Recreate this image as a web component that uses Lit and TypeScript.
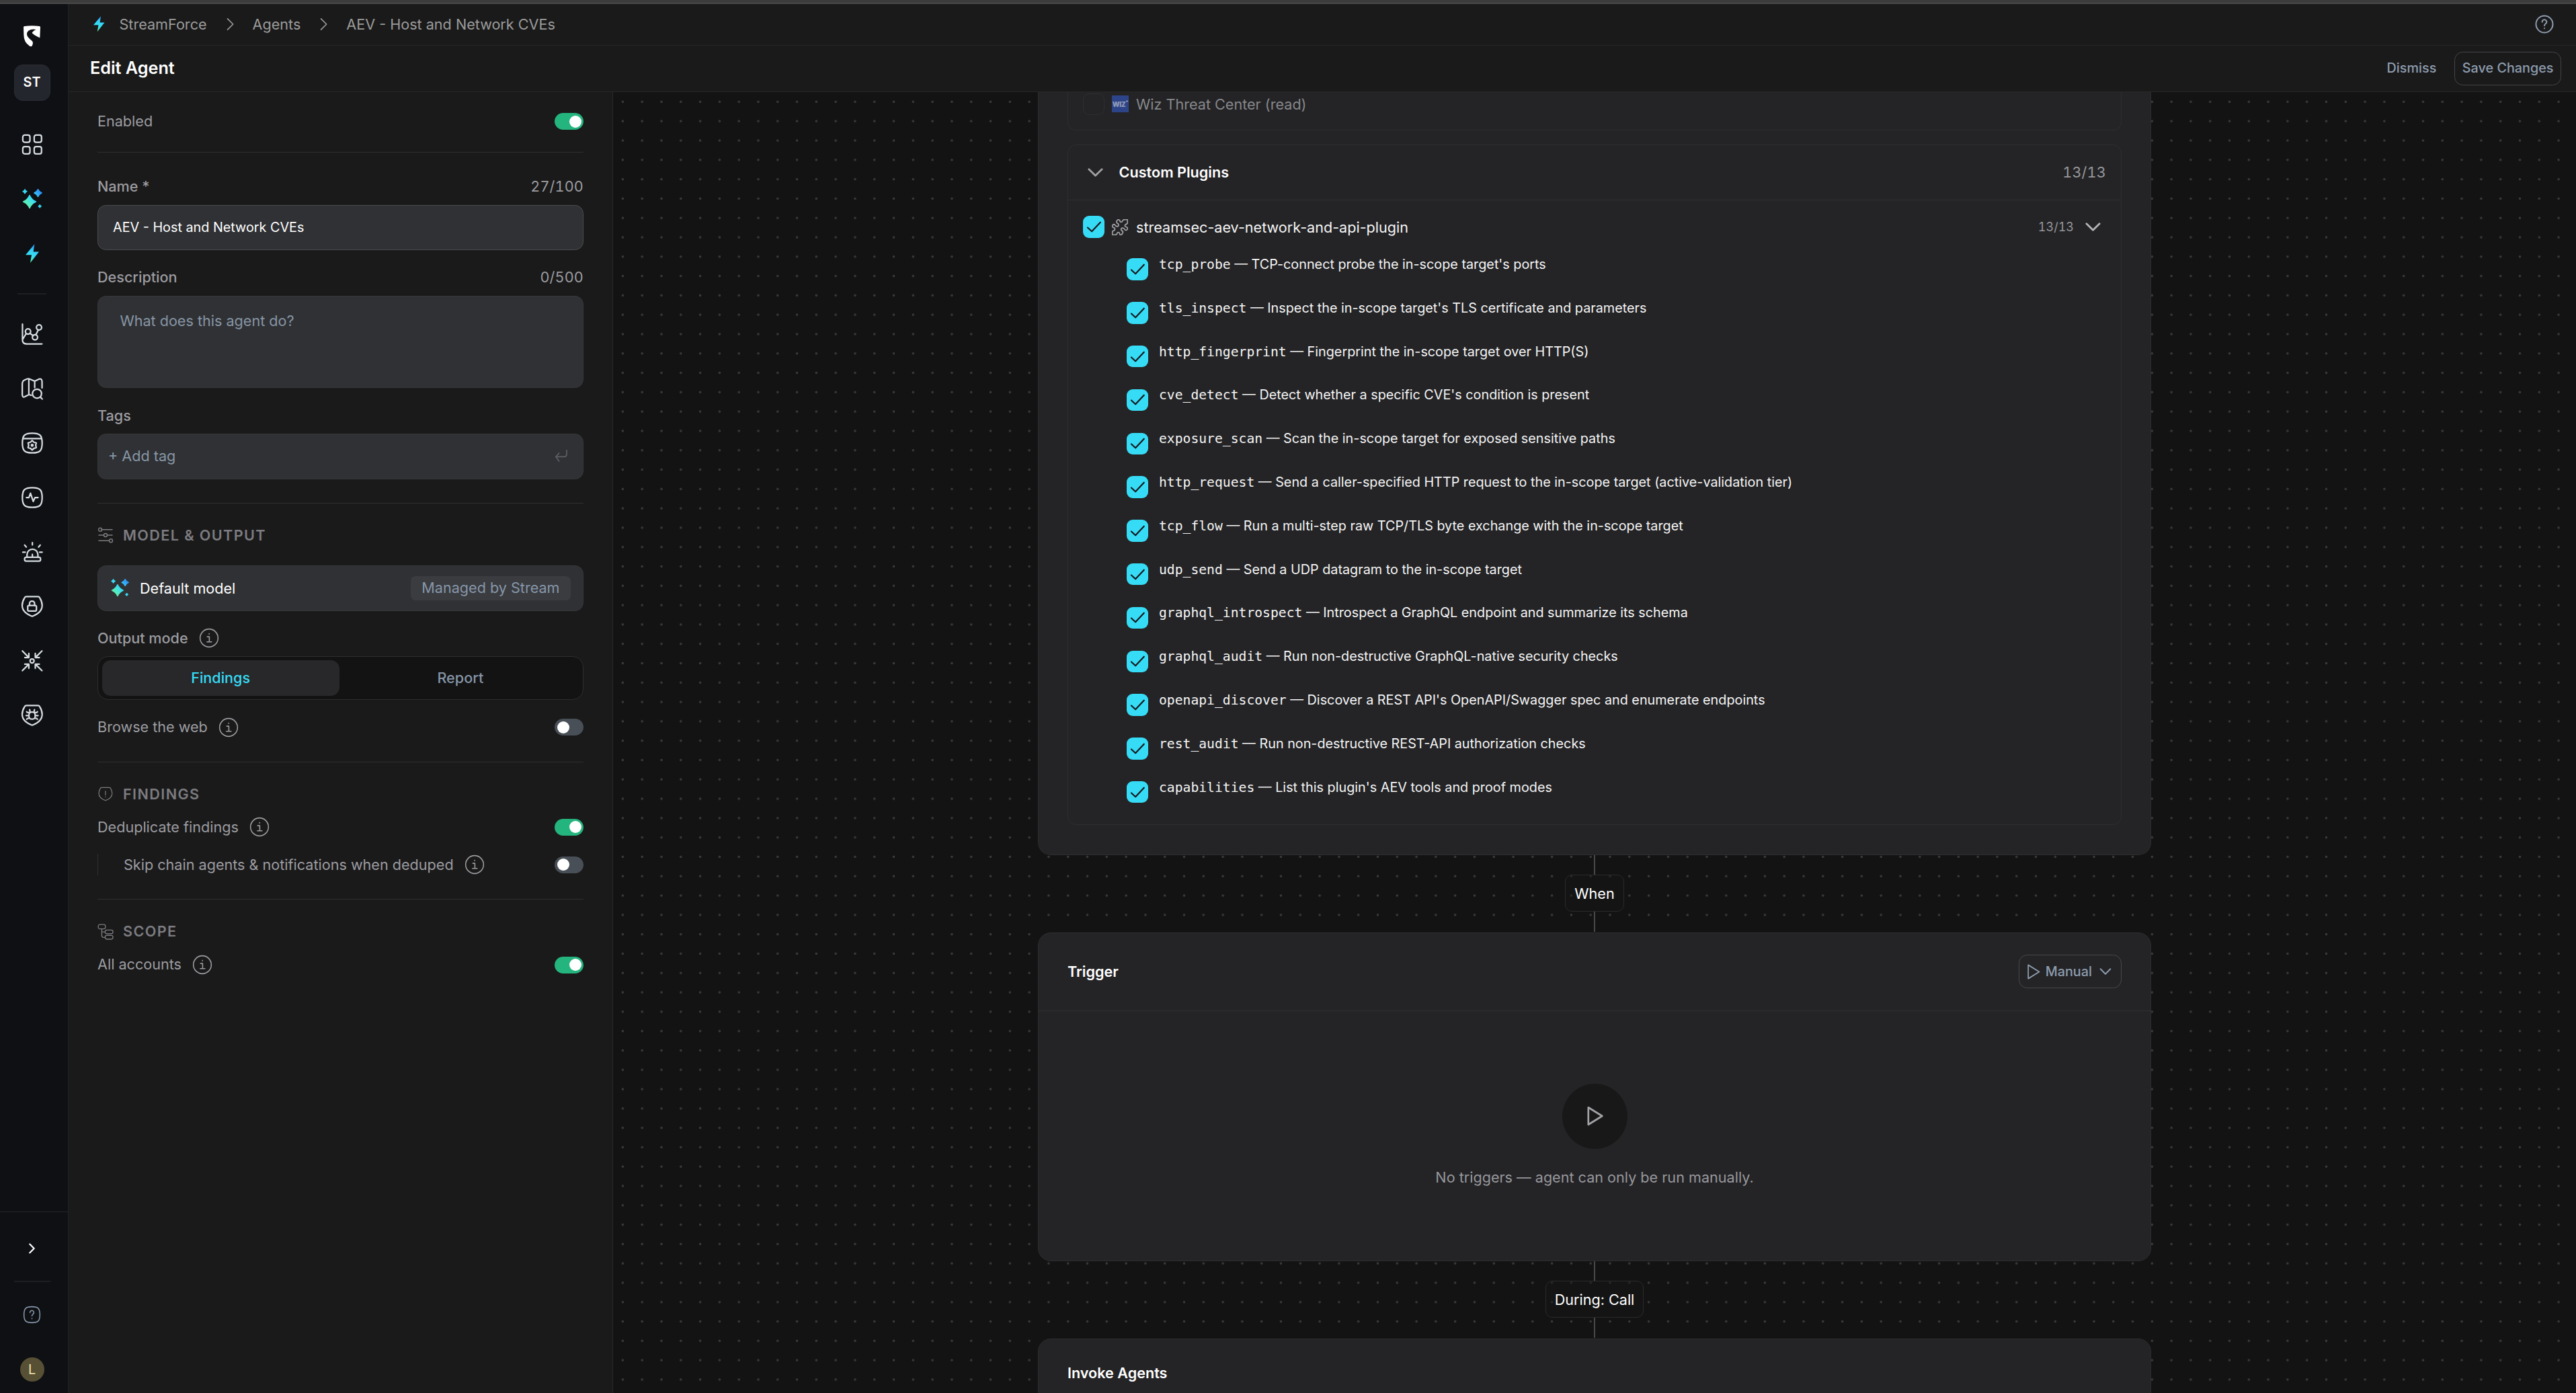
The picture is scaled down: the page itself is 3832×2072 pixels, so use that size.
import { LitElement, html, svg, css, nothing } from "lit";
import { customElement, property } from "lit/decorators.js";

const star = (x: number, y: number, r: number) => {
  const k = r * 0.3;
  return `M${x} ${y - r}Q${x + k} ${y - k} ${x + r} ${y}Q${x + k} ${y + k} ${x} ${y + r}Q${x - k} ${y + k} ${x - r} ${y}Q${x - k} ${y - k} ${x} ${y - r}Z`;
};

const SHIELD =
  "M6.2 2.3H17.6Q18.8 2.3 19.4 3.4C21 6 21.8 8.5 21.8 11C21.8 17 17 19.9 11.9 21.8C6.8 19.9 2 17 2 11C2 8.5 2.8 6 4.4 3.4Q5 2.3 6.2 2.3Z";
const SQUIRCLE =
  "M2.2 12C2.2 4.4 4.4 2.2 12 2.2S21.8 4.4 21.8 12S19.6 21.8 12 21.8S2.2 19.6 2.2 12Z";
const gear = Array.from({ length: 12 }, (_, i) => {
  const r = i % 2 ? 3.5 : 4.7;
  const a = (i * Math.PI) / 6 - Math.PI / 2;
  return `${(11.9 + r * Math.cos(a)).toFixed(2)},${(14.2 + r * Math.sin(a)).toFixed(2)}`;
}).join(" ");

const line24: Record<string, unknown> = {
  grid: svg`<rect x="2.6" y="2.6" width="7.1" height="7.1" rx="1.9"/><rect x="13.9" y="2.6" width="7.3" height="7.1" rx="1.9"/><rect x="2.6" y="14.1" width="7.1" height="7.1" rx="1.9"/><rect x="13.9" y="14.1" width="7.3" height="7.1" rx="1.9"/>`,
  chart: svg`<path d="M2.3 2V17.6Q2.3 21.7 6.4 21.7H21.6M2.6 17L5.9 11.5M9.7 11.2L12.9 13.5M15.5 12.7L17.9 8"/><circle cx="7.8" cy="9.4" r="2.6"/><circle cx="14.7" cy="15.2" r="2.6"/><circle cx="18.7" cy="5.3" r="2.6"/>`,
  map: svg`<path d="M11 18.6L8.6 18L4.4 20.2Q2.1 21 2.1 17.8V7.6Q2.1 4.3 4.4 3.5Q8 1.5 9.4 2.5L14.4 4.7L18.6 2.6Q21.6 1.6 21.7 5V11.4M8.6 2.6V18M14.4 4.8V11"/><circle cx="16.7" cy="17" r="4.5"/><path d="M20 20.4L21.9 22.3"/>`,
  boxgear: svg`<path d="${SQUIRCLE}M2.6 7.6H21.4"/><polygon points="${gear}"/><circle cx="11.9" cy="14.2" r=".8"/>`,
  pulse: svg`<path d="${SQUIRCLE}M6.2 12H8.7L10.2 7.7L13 15.9L14.7 12H17.7"/>`,
  siren: svg`<path d="M6.8 17V14.6A5.4 5.4 0 0 1 17.6 14.6V17M12.1 14.4V16.8M12.1 2.8V5M4.4 5.2L6.1 7.1M19.9 5.2L18.2 7.1M2.6 12.3H5M19.3 12.3H21.8"/><rect x="4.4" y="17.3" width="15.8" height="3.8" rx="1.6"/>`,
  lock: svg`<path d="${SHIELD}"/><rect x="7.5" y="11" width="8.6" height="5.6" rx="1.2"/><path d="M9.3 11V9.2A2.5 2.5 0 0 1 14.3 9.2V11"/>`,
  focus: svg`<circle cx="11.8" cy="12" r="2"/><path d="M2.2 2.2L8.4 8.6M8.6 4.6V8.7H4.6M21.6 2.2L15.2 8.6M15 4.6V8.7H19M2.2 21.7L8.4 15.4M8.6 19.4V15.3H4.6M21.6 21.7L15.2 15.4M15 19.4V15.3H19"/>`,
  bug: svg`<path d="${SHIELD}"/><rect x="8.7" y="8.8" width="6.2" height="7" rx="3"/><path d="M8.9 9.2Q6.6 9.6 6.5 8.4M14.7 9.2Q17 9.6 17.1 8.4M8.6 12.2H5.9M15 12.2H17.7M8.9 15Q6.6 14.8 6.5 16M14.7 15Q17 14.8 17.1 16M9.9 8.6L9.4 6.4M13.7 8.6L14.2 6.4"/>`,
  alert: svg`<path d="${SHIELD}M11.9 7.6V13.4M11.9 16V16.4"/>`,
  info: svg`<circle cx="12" cy="12" r="10"/><path d="M10 10.6H12.3V16.2M9.6 16.3H14.9M12.1 7.2V7.6"/>`,
  help: svg`<path d="${SQUIRCLE}M9.6 9.4A2.4 2.4 0 1 1 13.3 11.3Q12 12.2 12 13.6M12 16.6V16.9"/>`,
  helpround: svg`<circle cx="12" cy="12" r="10"/><path d="M9.4 9.4A2.6 2.6 0 1 1 13.4 11.4Q12 12.4 12 13.7M12 16.7V17"/>`,
  right: svg`<path d="M9 5L16 12L9 19"/>`,
  down: svg`<path d="M4 8L12 16L20 8"/>`,
  play: svg`<path d="M5.5 3L20 12L5.5 21Z"/>`,
  check: svg`<path d="M4.6 12.8L9.4 17.2L19.2 6.8"/>`,
  sliders: svg`<path d="M6.2 3.8H22M2 12H9.4M14.8 12H22M2 20.2H17.4"/><circle cx="4" cy="3.8" r="2.5"/><circle cx="12" cy="12" r="2.5"/><circle cx="20" cy="20.2" r="2.5"/>`,
  tree: svg`<rect x="1.2" y="1.2" width="10.6" height="6.4" rx="2.4"/><rect x="11.4" y="9.4" width="11.6" height="5.6" rx="2.4"/><rect x="11.4" y="17.4" width="11.6" height="5.6" rx="2.4"/><path d="M6.4 7.6V17.6Q6.4 20.3 9 20.3H11.4M6.4 12.2H11.4"/>`,
};

@customElement("ui-icon")
class UiIcon extends LitElement {
  @property() name = "";
  @property({ type: Number }) size = 36;
  @property({ type: Number }) weight = 1.5;
  static styles = css`
    :host { display: inline-flex; flex: none; }
    svg { display: block; fill: none; stroke: currentColor; stroke-linecap: round; stroke-linejoin: round; overflow: visible; }
  `;
  render() {
    return html`<svg width=${this.size} height=${this.size} viewBox="0 0 24 24" stroke-width=${this.weight}>${line24[this.name] ?? nothing}</svg>`;
  }
}

@customElement("ui-switch")
class UiSwitch extends LitElement {
  @property({ type: Boolean, reflect: true }) on = false;
  static styles = css`
    :host { display: flex; flex: none; align-items: center; width: 43px; height: 25px; border-radius: 12.5px; background: #484f57; padding: 0 3.5px; box-sizing: border-box; }
    :host([on]) { background: #24b47e; justify-content: flex-end; }
    .knob { width: 18px; height: 18px; border-radius: 50%; background: #fff; }
  `;
  render() {
    return html`<span class="knob"></span>`;
  }
}

@customElement("ui-check")
class UiCheck extends LitElement {
  static styles = css`
    :host { display: flex; flex: none; align-items: center; justify-content: center; width: 32px; height: 32.4px; border-radius: 9px; background: #36dcf6; color: #16181c; }
  `;
  render() {
    return html`<ui-icon name="check" size="31" weight="1.7"></ui-icon>`;
  }
}

const sparkle = (size: number) => html`<svg width=${size} height=${size} viewBox="0 0 30 30" class="block">
  <defs><linearGradient id="sg" gradientUnits="userSpaceOnUse" x1="2" y1="27" x2="28" y2="2">
    <stop offset="0" stop-color="#62f29f"/><stop offset=".22" stop-color="#58ecbc"/><stop offset=".5" stop-color="#37dcf6"/><stop offset=".7" stop-color="#35c4f8"/><stop offset=".9" stop-color="#2f97f5"/></linearGradient></defs>
  <g stroke-linejoin="round" stroke-width="1.6" fill="url(#sg)" stroke="url(#sg)">
    <path d=${star(11, 19, 9.4)}/><path d=${star(23.5, 6, 5.5)}/></g>
  <g stroke-linejoin="round" stroke-width="1" fill="#37dcf6" stroke="#37dcf6"><path d=${star(4, 3.8, 3.4)}/><path d=${star(26.2, 25.8, 2.5)}/></g>
</svg>`;

const bolt = (w: number) => html`<svg width=${w} height=${w * 1.4} viewBox="0 0 20 28" class="block">
  <defs><linearGradient id="bg" x1=".6" y1="0" x2=".4" y2="1">
    <stop offset="0" stop-color="#2b8ff5"/><stop offset=".35" stop-color="#35d0f8"/><stop offset=".65" stop-color="#38dff0"/><stop offset="1" stop-color="#62f29f"/></linearGradient></defs>
  <path fill="url(#bg)" d="M13.4 0L0 16.2H9L7 28L20 11.4H11.6Z"/>
</svg>`;

const logo = html`<svg width="25" height="31.3" viewBox="105 113 75 94" class="block"><path fill="#fff" d="M109 116Q142 111 177 116Q180 117 180 121L178 168Q154 158 143 146Q147 137 161 131Q141 127 127 136Q116 145 122 160Q129 171 144 183Q150 190 143 204Q139 208 133 205Q106 188 106 155L105 120Q105 117 109 116Z"/></svg>`;

const puzzle = html`<svg width="24" height="24" viewBox="0 0 70 70" class="block puzzle"><path d="M24 4C30 0 34 4 35 9C37 14 44 14 46 8C48 3 52 2 56 2H66Q68 2 68 5V14C68 18 66 21 61 22C55 24 55 31 61 33C67 34 69 39 67 44C64 50 58 48 56 45C52 38 44 36 41 41C38 46 42 50 46 52C50 55 47 62 43 66C39 70 34 69 34 63C33 56 24 56 23 61C22 66 19 68 14 68H4Q2 68 2 65V57C2 52 4 50 9 49C15 47 14 39 9 37C2 36 0 30 3 26C6 21 12 22 14 26C18 32 26 34 28 29C31 24 28 20 24 18C19 15 19 9 24 4Z"/></svg>`;

const enter = html`<svg width="18" height="18" viewBox="0 0 18 18" class="block enter"><path d="M17 .8V6.5Q17 10.4 13 10.4H1.2M5.6 5L1 10.4L5.6 17"/></svg>`;

const tools: [string, string][] = [
  ["tcp_probe", "TCP-connect probe the in-scope target's ports"],
  ["tls_inspect", "Inspect the in-scope target's TLS certificate and parameters"],
  ["http_fingerprint", "Fingerprint the in-scope target over HTTP(S)"],
  ["cve_detect", "Detect whether a specific CVE's condition is present"],
  ["exposure_scan", "Scan the in-scope target for exposed sensitive paths"],
  ["http_request", "Send a caller-specified HTTP request to the in-scope target (active-validation tier)"],
  ["tcp_flow", "Run a multi-step raw TCP/TLS byte exchange with the in-scope target"],
  ["udp_send", "Send a UDP datagram to the in-scope target"],
  ["graphql_introspect", "Introspect a GraphQL endpoint and summarize its schema"],
  ["graphql_audit", "Run non-destructive GraphQL-native security checks"],
  ["openapi_discover", "Discover a REST API's OpenAPI/Swagger spec and enumerate endpoints"],
  ["rest_audit", "Run non-destructive REST-API authorization checks"],
  ["capabilities", "List this plugin's AEV tools and proof modes"],
];

@customElement("app-sidebar")
class AppSidebar extends LitElement {
  static styles = css`
    :host { display: flex; flex-direction: column; flex: none; width: 102px; box-sizing: border-box; border-right: 1px solid #212326; background: #0e1014; color: #d7dde2; }
    .block { display: block; }
    .top, .bottom { display: flex; flex-direction: column; align-items: center; padding-right: 6px; }
    .top { flex: 1; padding-top: 32px; }
    .team { margin-top: 27px; width: 52px; height: 52px; border: 1px solid #2a2d33; border-radius: 13px; background: #23262d; color: #fff; font-weight: 600; font-size: 19.8px; line-height: 50px; text-align: center; }
    .nav { display: flex; flex-direction: column; align-items: center; }
    .item { height: 81px; display: flex; align-items: center; justify-content: center; }
    .nav.a { margin-top: 24.5px; }
    .rule { width: 43px; height: 2px; background: #1d1f23; margin: 18.5px 0 18px; }
    .bottom { border-top: 1px solid #22252a; height: 269px; }
    .open { color: #fff; height: 108px; display: flex; align-items: center; padding-right: 2px; }
    .rule.wide { width: 54px; margin: -6px 0 0; }
    .q { color: #8898aa; margin-top: 34px; }
    .avatar { margin-top: 45px; width: 36px; height: 36px; border-radius: 50%; background: #575035; color: #f3e5ab; font-size: 19.8px; display: flex; align-items: center; justify-content: center; }
  `;
  render() {
    return html`
      <div class="top">
        ${logo}
        <div class="team">ST</div>
        <div class="nav a">
          <div class="item"><ui-icon name="grid"></ui-icon></div>
          <div class="item">${sparkle(30)}</div>
          <div class="item">${bolt(20)}</div>
        </div>
        <div class="rule"></div>
        <div class="nav">
          ${["chart", "map", "boxgear", "pulse", "siren", "lock", "focus", "bug"].map(
            (n) => html`<div class="item"><ui-icon name=${n}></ui-icon></div>`
          )}
        </div>
      </div>
      <div class="bottom">
        <div class="open"><ui-icon name="right" size="22" weight="2.4"></ui-icon></div>
        <div class="rule wide"></div>
        <div class="q"><ui-icon name="help" size="29" weight="1.3"></ui-icon></div>
        <div class="avatar">L</div>
      </div>
    `;
  }
}

@customElement("agent-form")
class AgentForm extends LitElement {
  static styles = css`
    :host { display: flex; flex-direction: column; flex: none; width: 810px; box-sizing: border-box; padding: 27.8px 43px 0 43px; border-right: 1px solid #2a2a2b; background: #1a1a1a; color: #9c9ca1; font-size: 21.6px; }
    .block { display: block; }
    .row { display: flex; align-items: center; justify-content: space-between; height: 32.4px; line-height: 31.4px; white-space: nowrap; }
    .label { display: flex; align-items: center; gap: 15px; }
    .cap { font-weight: 500; }
    .count { font-variant-numeric: tabular-nums; letter-spacing: .15px; }
    .rule { height: 1px; background: #2f2f30; margin: 35px 0 31.4px; }
    .rule.first { margin: 28.4px 0 35px; }
    .field { display: flex; align-items: center; box-sizing: border-box; height: 67.6px; margin: 10.8px 0 24.6px; padding-bottom: 1px; border: 1px solid #37383b; border-radius: 12.6px; background: #303134; color: #8796a6; }
    .name { border-color: #4b4c4f; color: #fff; font-size: 19.8px; padding-left: 22px; }
    .desc { height: 137.3px; align-items: flex-start; padding: 20px 32.4px; line-height: 32.4px; }
    .tags { padding: 0 23px 2px 15px; justify-content: space-between; margin-bottom: 0; }
    .enter { fill: none; stroke: #5b5f65; stroke-width: 1.7; stroke-linecap: round; stroke-linejoin: round; }
    .section { display: flex; align-items: center; gap: 14px; height: 32.4px; line-height: 31.4px; color: #7c7c81; font-weight: 600; letter-spacing: 1.4px; }
    .model { margin-top: 28.4px; padding: 0 18px 0 19px; color: #fff; gap: 16px; }
    .model .text { flex: 1; }
    .badge { height: 36px; line-height: 35px; padding: 0 16.5px; border-radius: 7px; background: #3a3c40; color: #8796a8; }
    .seg { display: flex; gap: 3.6px; box-sizing: border-box; height: 64.6px; padding: 4.4px 5.6px; margin: 10.6px 0 24.6px; border: 1px solid #2e2e2f; border-radius: 16px; background: #131313; }
    .seg div { flex: 1; line-height: 53px; text-align: center; border-radius: 13px; color: #8796a8; font-weight: 500; }
    .seg .on { background: #28282a; color: #36dcf6; }
    .tight { margin-top: 16.6px; }
    .nested { margin-top: 23.6px; border-left: 1px solid #303031; padding-left: 38px; }
  `;
  private opt(text: string, on: boolean, cls = "") {
    return html`<div class="row ${cls}">
      <div class="label">${text}<ui-icon name="info" size="32" weight="1.2"></ui-icon></div>
      <ui-switch ?on=${on}></ui-switch>
    </div>`;
  }
  render() {
    return html`
      <div class="row"><span>Enabled</span><ui-switch on></ui-switch></div>
      <div class="rule first"></div>
      <div class="row"><span class="cap">Name *</span><span class="count">27/100</span></div>
      <div class="field name">AEV - Host and Network CVEs</div>
      <div class="row"><span class="cap">Description</span><span class="count">0/500</span></div>
      <div class="field desc">What does this agent do?</div>
      <div class="row"><span class="cap">Tags</span></div>
      <div class="field tags"><span>+ Add tag</span>${enter}</div>
      <div class="rule"></div>
      <div class="section"><ui-icon name="sliders" size="24" weight="1.4"></ui-icon><span>MODEL &amp; OUTPUT</span></div>
      <div class="field model">${sparkle(27)}<span class="text">Default model</span><span class="badge">Managed by Stream</span></div>
      <div class="row"><div class="label cap">Output mode<ui-icon name="info" size="32" weight="1.2"></ui-icon></div></div>
      <div class="seg"><div class="on">Findings</div><div>Report</div></div>
      ${this.opt("Browse the web", false)}
      <div class="rule"></div>
      <div class="section"><ui-icon name="alert" size="24" weight="1.2"></ui-icon><span>FINDINGS</span></div>
      ${this.opt("Deduplicate findings", true, "tight")}
      ${this.opt("Skip chain agents & notifications when deduped", false, "nested")}
      <div class="rule"></div>
      <div class="section"><ui-icon name="tree" size="24" weight="1.3"></ui-icon><span>SCOPE</span></div>
      ${this.opt("All accounts", true, "tight")}
    `;
  }
}

@customElement("agent-canvas")
class AgentCanvas extends LitElement {
  static styles = css`
    :host { display: flex; flex-direction: column; align-items: center; flex: 1; min-width: 0; overflow: hidden; background-color: #131313; background-image: radial-gradient(circle, #38383b 0, #38383b 1.5px, transparent 2.2px); background-size: 28.8px 28.8px; font-size: 21.6px; color: #f4f4f5; }
    .block { display: block; }
    .card { flex: none; box-sizing: border-box; width: 1656px; border: 1px solid #2d2d2f; border-radius: 19px; background: #242426; }
    .plugins { border-top: 0; border-radius: 0 0 19px 19px; height: 1135px; padding: 0 43px; }
    .box { border: 1px solid #2e2e30; border-radius: 12.6px; }
    .wiz { border-top: 0; border-radius: 0 0 12.6px 12.6px; height: 56px; }
    .line { display: flex; align-items: center; padding: 0 22px; gap: 11px; box-sizing: border-box; }
    .wiz .line { height: 35px; color: #87878b; }
    .empty { width: 30px; height: 30px; border: 1px solid #2f2f31; border-radius: 9px; }
    .wizlogo { width: 25px; height: 25px; background: #2e4489; color: #8e99b5; font: 900 10px "Inter", sans-serif; letter-spacing: -.3px; display: flex; align-items: center; justify-content: center; }
    .wizlogo sup { font-size: 6px; line-height: 1; align-self: flex-start; margin-top: 5px; }
    .text { flex: 1; }
    .custom { margin-top: 21px; height: 1010px; }
    .head { height: 82px; border-bottom: 1px solid #2f2f31; padding: 0 22px 1px 26px; gap: 20.6px; font-weight: 600; color: #fff; }
    .head ui-icon { color: #a0a0a5; }
    .count { font-weight: 400; color: #98989d; letter-spacing: .2px; font-variant-numeric: tabular-nums; }
    .plugin { height: 79px; }
    .plugin .text { padding-left: 1px; }
    .plugin .count { font-size: 18px; letter-spacing: 0; }
    .plugin ui-icon { color: #b4b4b8; margin: 0 5px 0 3px; }
    .puzzle { fill: none; stroke: #a2a2a6; stroke-width: 5.2; stroke-linejoin: round; }
    .tool { display: flex; align-items: flex-start; gap: 16px; height: 64.8px; padding-left: 87px; font-size: 19.8px; line-height: 32.4px; white-space: pre; }
    .tool ui-check { margin-top: 7.4px; }
    code { font-family: "DejaVu Sans Mono", monospace; font-size: 19.7px; line-height: 1; }
    .wire { width: 2px; flex: none; height: 29.4px; background: #48484a; }
    .label { flex: none; box-sizing: border-box; height: 55px; line-height: 54px; padding: 0 13px; border: 1px solid #2a2a2b; border-radius: 10px; background: rgba(22, 22, 22, .45); color: #fff; }
    .title { font-weight: 600; color: #fff; }
    .trigger { height: 489px; margin-top: 1px; }
    .trigger .top { display: flex; align-items: center; justify-content: space-between; height: 116px; box-sizing: border-box; padding: 0 43px; border-bottom: 1px solid #2f2f31; }
    .manual { display: flex; align-items: center; box-sizing: border-box; height: 50.4px; padding: 0 12px 0 7px; border: 1px solid #48484b; border-radius: 12.6px; font-size: 19.8px; font-weight: 500; color: #8d9cae; }
    .manual span { margin: 0 9px 0 5px; }
    .none { display: flex; flex-direction: column; align-items: center; padding-top: 108px; color: #97979c; }
    .disc { width: 97px; height: 97px; border-radius: 50%; background: #181818; color: #a2a2a7; display: flex; align-items: center; justify-content: center; }
    .note { margin-top: 26px; line-height: 32px; }
    .invoke { height: 300px; padding: 32px 43px; line-height: 36px; margin-top: 1px; }
  `;
  render() {
    return html`
      <section class="card plugins">
        <div class="box wiz">
          <div class="line"><div class="empty"></div><div class="wizlogo">WIZ<sup>+</sup></div><span class="text">Wiz Threat Center (read)</span></div>
        </div>
        <div class="box custom">
          <div class="line head"><ui-icon name="down" size="29" weight="2.3"></ui-icon><span class="text">Custom Plugins</span><span class="count">13/13</span></div>
          <div class="line plugin"><ui-check></ui-check>${puzzle}<span class="text">streamsec-aev-network-and-api-plugin</span><span class="count">13/13</span><ui-icon name="down" size="29" weight="2.3"></ui-icon></div>
          ${tools.map(([n, d]) => html`<div class="tool"><ui-check></ui-check><span><code>${n}</code> — ${d}</span></div>`)}
        </div>
      </section>
      <div class="wire"></div>
      <div class="label">When</div>
      <div class="wire"></div>
      <section class="card trigger">
        <div class="top"><span class="title">Trigger</span>
          <div class="manual"><ui-icon name="play" size="27" weight="1.6"></ui-icon><span>Manual</span><ui-icon name="down" size="22" weight="2.2"></ui-icon></div>
        </div>
        <div class="none">
          <div class="disc"><ui-icon name="play" size="34" weight="1.9"></ui-icon></div>
          <div class="note">No triggers — agent can only be run manually.</div>
        </div>
      </section>
      <div class="wire"></div>
      <div class="label">During: Call</div>
      <div class="wire"></div>
      <section class="card invoke"><span class="title">Invoke Agents</span></section>
    `;
  }
}

@customElement("app-root")
class AppRoot extends LitElement {
  static styles = css`
    :host { display: flex; flex-direction: column; width: 3832px; height: 2072px; overflow: hidden; background: #1a1a1a; font-family: "Inter", "Liberation Sans", sans-serif; -webkit-font-smoothing: antialiased; }
    .block { display: block; }
    .strip { flex: none; box-sizing: border-box; height: 6px; background: #3c3c3c; border-bottom: 2px solid #484848; }
    .shell { display: flex; flex: 1; min-height: 0; }
    .main { display: flex; flex-direction: column; flex: 1; min-width: 0; }
    .crumbs { display: flex; align-items: center; flex: none; box-sizing: border-box; height: 62px; border-bottom: 1px solid #272727; padding: 0 32px 1.5px 37px; font-size: 21.6px; color: #9b9b9b; }
    .crumbs .first { margin-left: 22px; }
    .crumbs .sep { margin: 0 20px; }
    .crumbs .help { margin-left: auto; color: #8d9cae; }
    .bar { display: flex; align-items: center; flex: none; box-sizing: border-box; height: 69px; border-bottom: 1px solid #272727; padding: 0 22px 0 32px; color: #8d9cae; font-size: 19.8px; font-weight: 500; }
    .title, .dismiss { padding-bottom: 2px; }
    .title { flex: 1; color: #fff; font-weight: 600; font-size: 25.2px; }
    .save { margin-left: 27px; height: 50px; box-sizing: border-box; line-height: 46px; padding: 0 10.5px; border: 1px solid #434448; border-radius: 12.6px; }
    .work { display: flex; flex: 1; min-height: 0; }
  `;
  render() {
    const sep = html`<ui-icon class="sep" name="right" size="28" weight="1.4"></ui-icon>`;
    return html`
      <div class="strip"></div>
      <div class="shell">
        <app-sidebar></app-sidebar>
        <div class="main">
          <div class="crumbs">
            ${bolt(16.5)}<span class="first">StreamForce</span>${sep}<span>Agents</span>${sep}<span>AEV - Host and Network CVEs</span>
            <ui-icon class="help" name="helpround" size="30" weight="1.6"></ui-icon>
          </div>
          <div class="bar"><span class="title">Edit Agent</span><span class="dismiss">Dismiss</span><span class="save">Save Changes</span></div>
          <div class="work"><agent-form></agent-form><agent-canvas></agent-canvas></div>
        </div>
      </div>
    `;
  }
}
